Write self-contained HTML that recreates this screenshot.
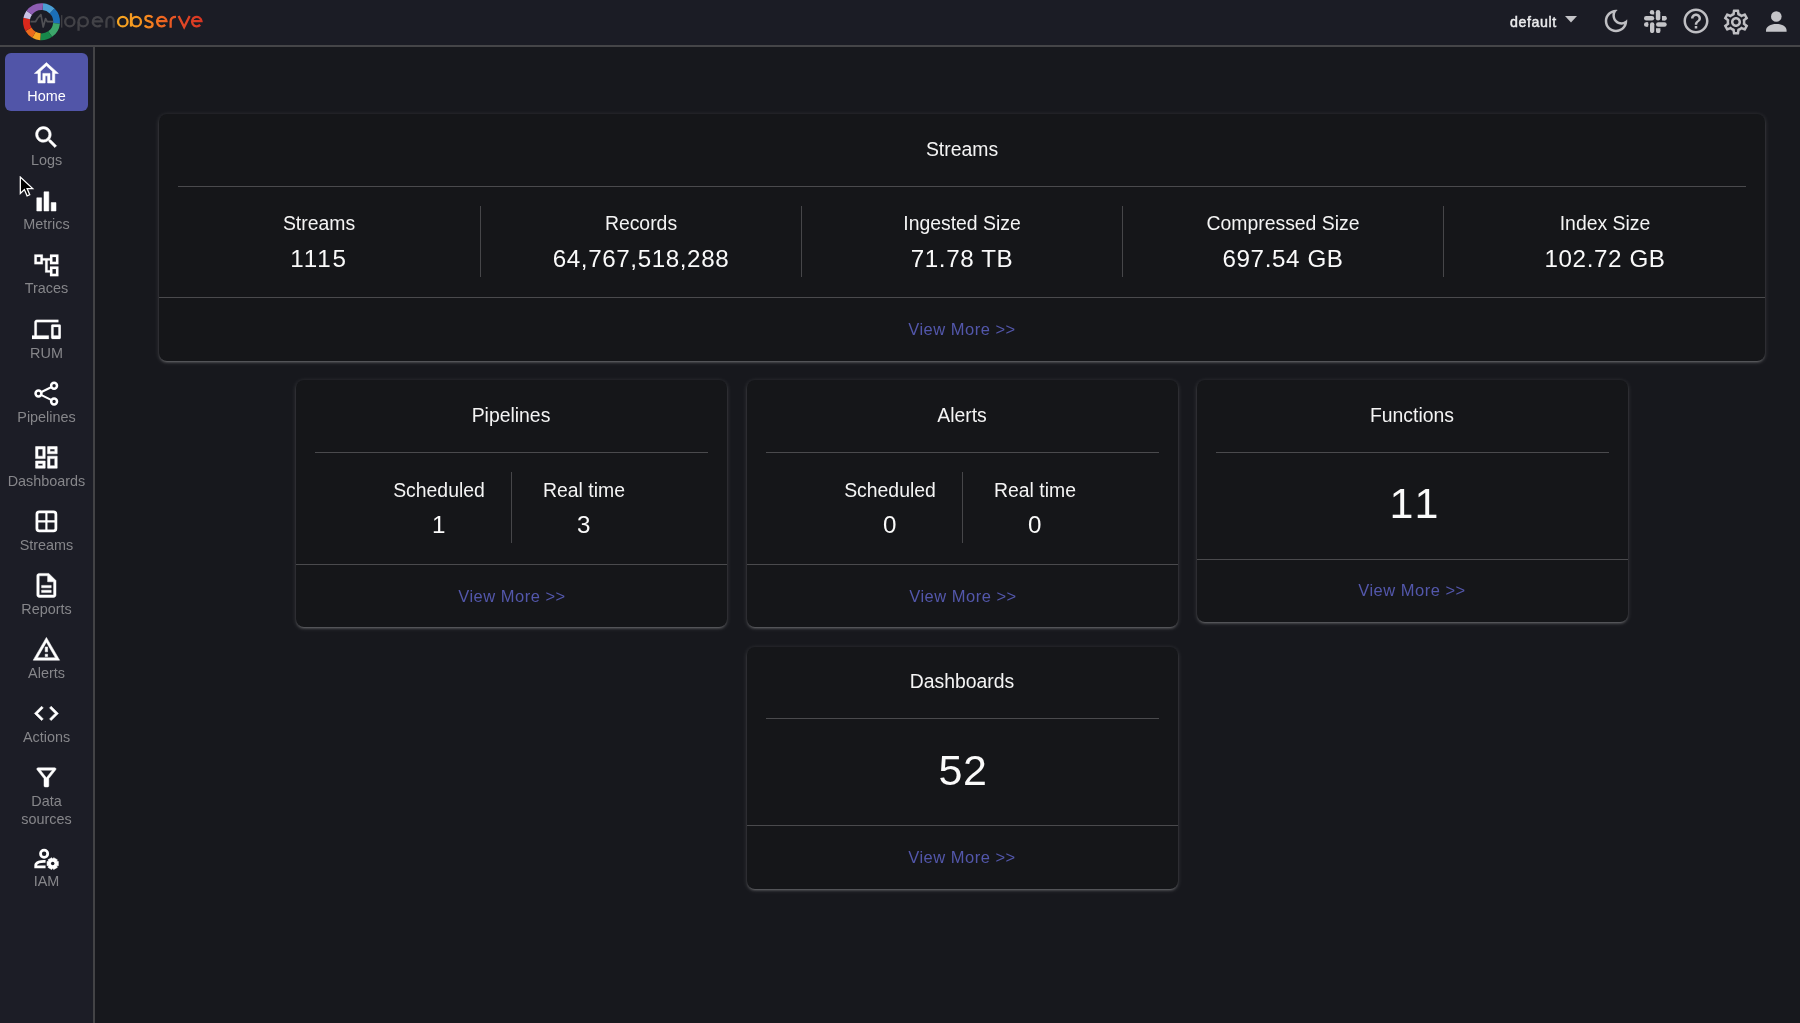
<!DOCTYPE html>
<html><head><meta charset="utf-8"><style>
*{box-sizing:border-box;margin:0;padding:0}
html,body{width:1800px;height:1023px;overflow:hidden;background:#17181d;font-family:"Liberation Sans",sans-serif;color:#fff}
.abs{position:absolute}
.hdr{position:absolute;left:0;top:0;width:1800px;height:47px;background:#1b1c25;border-bottom:2px solid #454548}
.side{position:absolute;left:0;top:47px;width:95px;height:976px;background:#1c1d26;border-right:2px solid #434346}
.lbl{will-change:transform;position:absolute;left:0;width:93px;text-align:center;font-size:14.4px;line-height:17.5px;color:#86868a;white-space:nowrap}
.ico{position:absolute;width:28.8px;height:28.8px;fill:#fff}
.ico .m{stroke:#fff}
.ico path.m{stroke-width:0.45px}
.card{position:absolute;background:#151619;border-radius:8px;
 box-shadow:0 1px 5px rgba(255,255,255,0.16),0 2px 2px rgba(255,255,255,0.12),0 3px 1px -2px rgba(255,255,255,0.1)}
.t{position:absolute;white-space:nowrap;text-align:center;transform:translateX(-50%);line-height:1;will-change:transform}
.hl{position:absolute;height:1px;background:#4a4a4d}
.vl{position:absolute;width:1px;background:#464649}
.more{color:#5357ab;font-size:16.5px;letter-spacing:0.5px}
.title{font-size:19.4px;color:#f4f4f4;margin-top:1px}
.lab{font-size:19.4px;color:#f4f4f4;margin-top:1.5px}
.lab2{margin-top:2.5px}
.val{font-size:24.2px;color:#fafafa;letter-spacing:0.6px;margin-top:2px}
.big{font-size:43px;color:#fafafa;letter-spacing:0.5px;margin-top:0px}
.hico{position:absolute;width:30px;height:30px;fill:#bfbfc3}
</style></head><body>
<div class="hdr"></div>
<svg class="abs" style="left:0;top:0;width:220px;height:45px;will-change:transform" viewBox="0 0 220 45">
<defs><linearGradient id="og" x1="117" y1="0" x2="203" y2="0" gradientUnits="userSpaceOnUse"><stop offset="0" stop-color="#f8a823"/><stop offset="0.3" stop-color="#f6921f"/><stop offset="0.5" stop-color="#f06a20"/><stop offset="0.75" stop-color="#e24826"/><stop offset="1" stop-color="#d73422"/></linearGradient></defs>
<path d="M42.82 6.66A15.1 15.1 0 0 1 52.18 11.02" stroke="#4b9fd5" stroke-width="6.800000000000001" fill="none"/><path d="M52.18 11.02A15.1 15.1 0 0 1 56.52 23.28" stroke="#1b6fb8" stroke-width="6.800000000000001" fill="none"/><path d="M56.52 23.28A15.1 15.1 0 0 1 50.16 34.07" stroke="#3da66b" stroke-width="6.800000000000001" fill="none"/><path d="M50.16 34.07A15.1 15.1 0 0 1 40.45 36.76" stroke="#17884a" stroke-width="6.800000000000001" fill="none"/><path d="M40.45 36.76A15.1 15.1 0 0 1 33.95 34.78" stroke="#f6a623" stroke-width="6.800000000000001" fill="none"/><path d="M33.95 34.78A15.1 15.1 0 0 1 28.42 29.25" stroke="#ec6a1c" stroke-width="6.800000000000001" fill="none"/><path d="M28.42 29.25A15.1 15.1 0 0 1 26.73 18.56" stroke="#d9281c" stroke-width="6.800000000000001" fill="none"/><path d="M26.73 18.56A15.1 15.1 0 0 1 29.28 12.82" stroke="#c9c2e6" stroke-width="6.800000000000001" fill="none"/><path d="M29.28 12.82A15.1 15.1 0 0 1 42.82 6.66" stroke="#8e5db3" stroke-width="6.800000000000001" fill="none"/>
<path d="M30.5 21.7H35.5L37.6 18.3 40.9 14.6 43.2 27 45.6 18.6 47.2 21.7H53.3" stroke="#505054" stroke-width="1.7" fill="none" stroke-linejoin="round"/>
<rect x="61" y="15.1" width="1.4" height="12.5" fill="#3e3e42"/>
<g fill="none" stroke="#424247" stroke-width="2.3">
<circle cx="69.8" cy="21.7" r="4.65"/>
<circle cx="83.2" cy="21.7" r="4.65"/><path d="M78.55 21.7V30.8"/>
<path d="M93.1 21.4H102.1A4.65 4.65 0 1 0 100.9 24.9"/>
<path d="M106.45 27.7V21.7A3.65 4.85 0 0 1 113.75 21.7V27.7"/>
</g>
<g fill="none" stroke="url(#og)" stroke-width="2.3">
<circle cx="122.8" cy="21.65" r="4.75"/>
<circle cx="136.2" cy="21.65" r="4.75"/><path d="M131 13.2V26.6"/>
<path d="M152.4 17.7C151.6 16.5 150.2 15.9 148.7 15.9 146.6 15.9 145.4 17 145.4 18.5 145.4 20.4 147.4 20.9 149 21.3 150.9 21.8 152.6 22.4 152.6 24.4 152.6 26.1 151 27.3 148.8 27.3 146.9 27.3 145.5 26.5 144.9 25.3"/>
<path d="M157.1 21.2H166.5A4.75 4.75 0 1 0 165.2 24.9"/>
<path d="M170.65 27.7V21.5C170.65 18.3 172.6 16.9 176 16.9"/>
<path d="M178.6 16L184.15 27.1 189.7 16"/>
<path d="M192.1 21.2H201.5A4.75 4.75 0 1 0 200.2 24.9"/>
</g>
</svg><div class="abs" style="left:1509.5px;top:14px;will-change:transform;font-size:14.2px;color:#ececee;letter-spacing:0.6px;line-height:17px;-webkit-text-stroke:0.45px #ececee">default</div><svg class="abs" style="left:1565px;top:16px;width:12px;height:7px" viewBox="0 0 12 7"><path d="M0 0h12L6 6.5z" fill="#c4c4c8"/></svg><svg class="hico" style="left:1600.60px;top:6.30px;width:30px;height:30px" viewBox="0 0 24 24"><path class="m" d="M9.37 5.51c-.18.64-.27 1.31-.27 1.99 0 4.08 3.32 7.4 7.4 7.4.68 0 1.35-.09 1.99-.27C17.45 17.19 14.93 19 12 19c-3.86 0-7-3.14-7-7 0-2.93 1.810-5.45 4.37-6.49zM12 3c-4.97 0-9 4.03-9 9s4.03 9 9 9 9-4.03 9-9c0-.46-.04-.92-.1-1.36-.98 1.37-2.58 2.26-4.4 2.26-2.98 0-5.4-2.42-5.4-5.4 0-1.81.89-3.42 2.26-4.4-.44-.06-.9-.1-1.36-.1z"/></svg><svg class="abs" style="left:1643.5px;top:9.6px;width:23px;height:23px" viewBox="0 0 23 23" fill="#c4c4c8">
<path d="M8 0a2.2 2.2 0 0 0 0 4.4h2.2V2.2A2.2 2.2 0 0 0 8 0z"/>
<rect x="11.8" y="0" width="4.5" height="10.4" rx="2.25"/>
<rect x="0" y="6" width="10.2" height="4.4" rx="2.2"/>
<path d="M18 6h2.5a2.2 2.2 0 0 1 0 4.4H18z"/><circle cx="20.4" cy="8.2" r="2.2"/>
<circle cx="2.2" cy="14.45" r="2.2"/><path d="M2.2 12.25h2v4.4h-2z"/>
<rect x="6" y="12.2" width="4.3" height="10.9" rx="2.15"/>
<rect x="12" y="12.2" width="10.7" height="4.5" rx="2.25"/>
<circle cx="14.2" cy="20.9" r="2.2"/><path d="M12 18.2h4.4v2.7H12z"/>
</svg><svg class="hico" style="left:1680.80px;top:6.40px;width:30px;height:30px" viewBox="0 0 24 24"><path class="m" d="M11 18h2v-2h-2v2zm1-16C6.48 2 2 6.48 2 12s4.48 10 10 10 10-4.48 10-10S17.52 2 12 2zm0 18c-4.41 0-8-3.59-8-8s3.59-8 8-8 8 3.59 8 8-3.59 8-8 8zm0-14c-2.21 0-4 1.79-4 4h2c0-1.1.9-2 2-2s2 .9 2 2c0 2-3 1.75-3 5h2c0-2.25 3-2.5 3-5 0-2.21-1.79-4-4-4z"/></svg><svg class="hico" style="left:1721.00px;top:6.50px;width:30px;height:30px" viewBox="0 0 24 24"><path class="m" d="M19.43 12.98c.04-.32.07-.64.07-.98 0-.34-.03-.66-.07-.98l2.110-1.65c.19-.15.24-.42.12-.64l-2-3.46c-.09-.16-.26-.25-.44-.25-.06 0-.12.01-.17.03l-2.49 1c-.52-.4-1.08-.73-1.69-.98l-.38-2.65C14.46 2.18 14.25 2 14 2h-4c-.25 0-.46.18-.49.42l-.38 2.65c-.61.25-1.17.59-1.69.98l-2.49-1c-.06-.02-.12-.03-.18-.03-.17 0-.34.09-.43.25l-2 3.46c-.13.22-.07.49.12.64l2.11 1.65c-.04.32-.07.65-.07.98 0 .33.03.66.07.98l-2.11 1.65c-.19.15-.24.42-.12.64l2 3.46c.09.16.26.25.44.25.06 0 .12-.01.17-.03l2.49-1c.52.4 1.08.73 1.69.98l.38 2.65c.03.24.24.42.49.42h4c.25 0 .46-.18.49-.42l.38-2.65c.61-.25 1.17-.59 1.69-.98l2.49 1c.06.02.12.03.18.03.17 0 .34-.09.43-.25l2-3.46c.12-.22.07-.49-.12-.64l-2.11-1.65zm-1.98-1.71c.04.31.05.52.05.73 0 .21-.02.43-.05.73l-.14 1.13.89.7 1.08.84-.7 1.21-1.27-.51-1.04-.42-.9.68c-.43.32-.84.56-1.25.73l-1.06.43-.16 1.13-.2 1.35h-1.4l-.19-1.35-.16-1.13-1.06-.43c-.43-.18-.83-.41-1.23-.71l-.91-.7-1.06.43-1.27.51-.7-1.21 1.08-.84.89-.7-.14-1.13c-.03-.31-.05-.54-.05-.74s.02-.43.05-.73l.14-1.13-.89-.7-1.08-.84.7-1.21 1.27.51 1.04.42.9-.68c.43-.32.84-.56 1.25-.73l1.06-.43.16-1.13.2-1.35h1.39l.19 1.35.16 1.13 1.06.43c.43.18.83.41 1.23.71l.91.7 1.06-.43 1.27-.51.7 1.21-1.07.85-.89.7.14 1.13zM12 8c-2.21 0-4 1.790-4 4s1.79 4 4 4 4-1.79 4-4-1.79-4-4-4zm0 6c-1.1 0-2-.9-2-2s.9-2 2-2 2 .9 2 2-.9 2-2 2z"/></svg><svg class="abs" style="left:1760px;top:5px;width:32px;height:32px" viewBox="1760 5 32 32" fill="#c4c4c8"><circle cx="1776.3" cy="16.5" r="5.3"/><path d="M1766 31.8v-1.2c0-4.2 4.6-6.6 10.3-6.6s10.3 2.4 10.3 6.6v1.2z"/></svg>
<div class="side"></div>
<div class="abs" style="left:5px;top:53px;width:83px;height:58px;background:#5155a8;border-radius:6px"></div><svg class="ico" style="left:31.80px;top:58.80px;width:28.8px;height:28.8px" viewBox="0 0 24 24"><path class="m" d="M12 5.69l5 4.5V18h-2v-6H9v6H7v-7.81l5-4.5M12 3L2 12h3v8h6v-6h2v6h6v-8h3L12 3z"/></svg><div class="lbl act" style="top:87.8px;color:#fff">Home</div><svg class="ico" style="left:31.80px;top:122.50px;width:28.8px;height:28.8px" viewBox="0 0 24 24"><path class="m" d="M15.5 14h-.79l-.28-.27C15.41 12.59 16 11.11 16 9.5 16 5.91 13.09 3 9.5 3S3 5.91 3 9.5 5.91 16 9.5 16c1.61 0 3.09-.59 4.23-1.57l.27.28v.79l5 4.99L20.49 19l-4.99-5zm-6 0C7.01 14 5 11.99 5 9.5S7.01 5 9.5 5 14 7.01 14 9.5 11.99 14 9.5 14z"/></svg><div class="lbl" style="top:152.4px">Logs</div><svg class="ico" style="left:31.80px;top:187.10px;width:28.8px;height:28.8px" viewBox="0 0 24 24"><path class="m" d="M4 9h4v11H4zm12 4h4v7h-4zm-6-9h4v16h-4z"/></svg><div class="lbl" style="top:216.3px">Metrics</div><svg class="ico" style="left:31.80px;top:250.60px;width:28.8px;height:28.8px" viewBox="0 0 24 24"><path class="m" style="stroke-width:0.15px" d="M22 11V3h-7v3H9V3H2v8h7V8h2v10h4v3h7v-8h-7v3h-2V8h2v3h7zM7 9H4V5h3v4zm10 6h3v4h-3v-4zm0-10h3v4h-3V5z"/></svg><div class="lbl" style="top:280.4px">Traces</div><svg class="ico" style="left:31.80px;top:314.70px;width:28.8px;height:28.8px" viewBox="0 0 24 24"><path class="m" style="stroke-width:0.15px" d="M4 6h18V4H4c-1.1 0-2 .9-2 2v11H0v3h14v-3H4V6zm19 2h-6c-.55 0-1 .45-1 1v10c0 .55.45 1 1 1h6c.55 0 1-.45 1-1V9c0-.55-.45-1-1-1zm-1 9h-4v-7h4v7z"/></svg><div class="lbl" style="top:344.5px">RUM</div><svg class="ico" style="left:31.80px;top:378.80px;width:28.8px;height:28.8px" viewBox="0 0 24 24"><g fill="none" stroke="#fff"><path d="M7.9 10.85L15.9 6.85M7.9 13.4L15.9 17.45" stroke-width="1.75"/><circle cx="5.4" cy="12.1" r="2.45" stroke-width="2.1"/><circle cx="18.4" cy="5.6" r="2.45" stroke-width="2.1"/><circle cx="18.4" cy="18.75" r="2.45" stroke-width="2.1"/></g></svg><div class="lbl" style="top:408.6px">Pipelines</div><svg class="ico" style="left:31.80px;top:442.90px;width:28.8px;height:28.8px" viewBox="0 0 24 24"><path class="m" d="M19 5v2h-4V5h4M9 5v6H5V5h4m10 8v6h-4v-6h4M9 17v2H5v-2h4M21 3h-8v6h8V3zM11 3H3v10h8V3zm10 8h-8v10h8V11zm-10 4H3v6h8v-6z"/></svg><div class="lbl" style="top:472.7px">Dashboards</div><svg class="ico" style="left:31.80px;top:507.30px;width:28.8px;height:28.8px" viewBox="0 0 24 24"><rect x="4.1" y="4.1" width="15.8" height="15.8" rx="2" fill="none" stroke="#fff" stroke-width="2.3"/><path d="M12 4v16M4 12h16" stroke="#fff" stroke-width="1.8"/></svg><div class="lbl" style="top:536.8px">Streams</div><svg class="ico" style="left:31.60px;top:570.60px;width:28.8px;height:28.8px" viewBox="0 -960 960 960"><path class="m" style="stroke-width:16px" d="M320-240h320v-80H320v80Zm0-160h320v-80H320v80ZM240-80q-33 0-56.5-23.5T160-160v-640q0-33 23.5-56.5T240-880h320l240 240v480q0 33-23.5 56.5T720-80H240Zm280-520v-200H240v640h480v-440H520Z"/></svg><div class="lbl" style="top:600.8px">Reports</div><svg class="ico" style="left:31.80px;top:635.20px;width:28.8px;height:28.8px" viewBox="0 0 24 24"><path class="m" d="M12 5.99L19.53 19H4.47L12 5.99M12 2L1 21h22L12 2zm1 14h-2v2h2v-2zm0-6h-2v4h2v-4z"/></svg><div class="lbl" style="top:664.8px">Alerts</div><svg class="ico" style="left:31.80px;top:699.10px;width:28.8px;height:28.8px" viewBox="0 0 24 24"><path class="m" d="M9.4 16.6L4.8 12l4.6-4.6L8 6l-6 6 6 6 1.4-1.4zm5.2 0l4.6-4.6-4.6-4.6L16 6l6 6-6 6-1.4-1.4z"/></svg><div class="lbl" style="top:728.8px">Actions</div><svg class="ico" style="left:31.70px;top:763.10px;width:28.8px;height:28.8px" viewBox="0 -960 960 960"><path class="m" style="stroke-width:16px" d="M440-160q-17 0-28.5-11.5T400-200v-240L168-736q-15-20-4.5-42t36.5-22h560q26 0 36.5 22t-4.5 42L560-440v240q0 17-11.5 28.5T520-160h-80Zm40-308 198-252H282l198 252Z"/></svg><div class="lbl" style="top:793.1px">Data<br>sources</div><svg class="ico" style="left:31.60px;top:845.00px;width:28.8px;height:28.8px" viewBox="0 0 24 24"><g fill="none" stroke="#fff" stroke-width="2.3"><circle cx="10.1" cy="7.3" r="3"/><path d="M11.3 13.6C8 13.4 4.5 14.2 3.4 15.8 3.1 16.3 3.1 16.8 3.1 17.3V18.3H11.3"/></g><g transform="translate(17.25 15.5)"><path d="M3.25 -1.86 L4.68 -1.76 L4.68 1.76 L3.25 1.86 L3.24 1.89 L3.87 3.17 L0.81 4.93 L0.01 3.75 L-0.01 3.75 L-0.81 4.93 L-3.87 3.17 L-3.24 1.89 L-3.25 1.86 L-4.68 1.76 L-4.68 -1.76 L-3.25 -1.86 L-3.24 -1.89 L-3.87 -3.17 L-0.81 -4.93 L-0.01 -3.75 L0.01 -3.75 L0.81 -4.93 L3.87 -3.17 L3.24 -1.89Z" stroke="#fff" stroke-width="0.5" stroke-linejoin="round"/><circle r="1.45" fill="#1c1d26" stroke="none"/></g></svg><div class="lbl" style="top:873.4px">IAM</div>
<!-- Streams card -->
<div class="card" style="left:159px;top:114px;width:1606px;height:247px">
  <div class="t title" style="left:803px;top:25px">Streams</div>
  <div class="hl" style="left:19px;top:72px;width:1568px"></div>
  <div class="t lab" style="left:160px;top:98px">Streams</div>
  <div class="t val" style="left:160px;top:131px;letter-spacing:1.8px">1115</div>
  <div class="vl" style="left:321px;top:92px;height:71px"></div>
  <div class="t lab" style="left:482px;top:98px">Records</div>
  <div class="t val" style="left:482px;top:131px">64,767,518,288</div>
  <div class="vl" style="left:642px;top:92px;height:71px"></div>
  <div class="t lab" style="left:803px;top:98px">Ingested Size</div>
  <div class="t val" style="left:803px;top:131px">71.78 TB</div>
  <div class="vl" style="left:963px;top:92px;height:71px"></div>
  <div class="t lab" style="left:1124px;top:98px">Compressed Size</div>
  <div class="t val" style="left:1124px;top:131px">697.54 GB</div>
  <div class="vl" style="left:1284px;top:92px;height:71px"></div>
  <div class="t lab" style="left:1446px;top:98px">Index Size</div>
  <div class="t val" style="left:1446px;top:131px">102.72 GB</div>
  <div class="hl" style="left:0;top:183px;width:1606px"></div>
  <div class="t more" style="left:803px;top:207px">View More &gt;&gt;</div>
</div>

<!-- Pipelines -->
<div class="card" style="left:296px;top:380px;width:431px;height:247px">
  <div class="t title" style="left:215px;top:25px">Pipelines</div>
  <div class="hl" style="left:19px;top:72px;width:393px"></div>
  <div class="t lab lab2" style="left:143px;top:98px">Scheduled</div>
  <div class="t val" style="left:143px;top:131px">1</div>
  <div class="vl" style="left:215px;top:92px;height:71px"></div>
  <div class="t lab lab2" style="left:288px;top:98px">Real time</div>
  <div class="t val" style="left:288px;top:131px">3</div>
  <div class="hl" style="left:0;top:184px;width:431px"></div>
  <div class="t more" style="left:216px;top:208px">View More &gt;&gt;</div>
</div>

<!-- Alerts -->
<div class="card" style="left:747px;top:380px;width:431px;height:247px">
  <div class="t title" style="left:215px;top:25px">Alerts</div>
  <div class="hl" style="left:19px;top:72px;width:393px"></div>
  <div class="t lab lab2" style="left:143px;top:98px">Scheduled</div>
  <div class="t val" style="left:143px;top:131px">0</div>
  <div class="vl" style="left:215px;top:92px;height:71px"></div>
  <div class="t lab lab2" style="left:288px;top:98px">Real time</div>
  <div class="t val" style="left:288px;top:131px">0</div>
  <div class="hl" style="left:0;top:184px;width:431px"></div>
  <div class="t more" style="left:216px;top:208px">View More &gt;&gt;</div>
</div>

<!-- Functions -->
<div class="card" style="left:1197px;top:380px;width:431px;height:242px">
  <div class="t title" style="left:215px;top:25px">Functions</div>
  <div class="hl" style="left:19px;top:72px;width:393px"></div>
  <div class="t big" style="left:218.5px;top:102px;letter-spacing:4.2px">11</div>
  <div class="hl" style="left:0;top:179px;width:431px"></div>
  <div class="t more" style="left:215px;top:202px">View More &gt;&gt;</div>
</div>

<!-- Dashboards -->
<div class="card" style="left:747px;top:647px;width:431px;height:242px">
  <div class="t title" style="left:215px;top:24px">Dashboards</div>
  <div class="hl" style="left:19px;top:71px;width:393px"></div>
  <div class="t big" style="left:216px;top:102px">52</div>
  <div class="hl" style="left:0;top:178px;width:431px"></div>
  <div class="t more" style="left:215px;top:202px">View More &gt;&gt;</div>
</div>


<svg class="abs" style="left:18.8px;top:175.9px;width:15.84px;height:21.12px" viewBox="0 0 18 24"><path d="M1.5 1.2v18.6l4.6-4.4 3.1 7.2 3-1.3-3-7h6.4z" fill="#000" stroke="#fff" stroke-width="1.45" stroke-linejoin="miter"/></svg>
</body></html>
